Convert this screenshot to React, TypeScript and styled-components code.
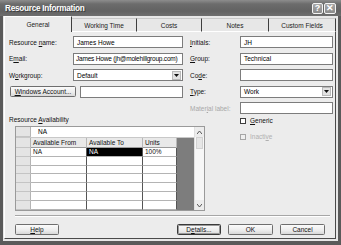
import React from "react";
import styled, { createGlobalStyle } from "styled-components";

const GlobalStyle = createGlobalStyle`
  html, body {
    margin: 0;
    padding: 0;
    background: #ffffff;
  }
  body {
    font-family: "Liberation Sans", Arial, sans-serif;
    font-size: 6.5px;
    color: #000;
  }
  * { box-sizing: border-box; }
`;

const Window = styled.div`
  width: 341px;
  height: 245px;
  display: flex;
  flex-direction: column;
  background: #5a5a5a;
  overflow: hidden;
`;

const TitleBar = styled.div`
  height: 16px;
  flex: none;
  display: flex;
  align-items: center;
  padding: 0 5px 0 5px;
  background: linear-gradient(#8d8d8d 0%, #6c6c6c 25%, #626262 70%, #6e6e6e 100%);
`;

const Title = styled.div`
  flex: 1;
  color: #fff;
  font-size: 8.2px;
  font-weight: bold;
  letter-spacing: -0.25px;
  text-shadow: 1px 1px 0 #3c3c3c;
`;

const CapButton = styled.div<{ $wide?: boolean }>`
  width: ${(p) => (p.$wide ? 12 : 11)}px;
  height: 11px;
  margin-left: 1px;
  border: 1px solid #f4f4f4;
  border-radius: 2px;
  background: linear-gradient(#a8a8a8, #8a8a8a);
  color: #fff;
  font-size: 9px;
  font-weight: bold;
  line-height: 9px;
  text-align: center;
`;

const Frame = styled.div`
  flex: 1;
  display: flex;
  padding: 0 3px 4px 3px;
`;

const Body = styled.div`
  flex: 1;
  display: flex;
  flex-direction: column;
  background: #e7e7e7;
  padding: 0 2px 2px 1px;
`;

const TabStrip = styled.div`
  height: 16px;
  display: flex;
  align-items: flex-end;
`;

const Tab = styled.div<{ $w: number; $active?: boolean }>`
  width: ${(p) => p.$w}px;
  height: ${(p) => (p.$active ? 16 : 14)}px;
  display: flex;
  align-items: center;
  justify-content: center;
  border-right: 1px solid #3f3f3f;
  border-top: 1px solid ${(p) => (p.$active ? "#ffffff" : "#c8c8c8")};
  border-left: ${(p) => (p.$active ? "1px solid #ffffff" : "none")};
  border-bottom: ${(p) => (p.$active ? "none" : "1px solid #ffffff")};
  background: ${(p) => (p.$active ? "#ececec" : "#e7e7e7")};
  color: #222;
  padding-top: ${(p) => (p.$active ? 0 : 1)}px;
`;

const Panel = styled.div`
  flex: 1;
  display: flex;
  flex-direction: column;
  background: #ececec;
  border-left: 1px solid #ffffff;
  border-right: 1px solid #4a4a4a;
  border-bottom: 1px solid #4a4a4a;
  padding: 4px 2px 0 4px;
`;

const FormGrid = styled.div`
  display: grid;
  grid-template-columns: 64px 110px 57px 93px;
  grid-auto-rows: 12px;
  row-gap: 4.5px;
  align-items: center;
`;

const Label = styled.div<{ $disabled?: boolean; $right?: boolean }>`
  grid-column: ${(p) => (p.$right ? 3 : "auto")};
  margin-left: ${(p) => (p.$right ? 7 : 0)}px;
  color: ${(p) => (p.$disabled ? "#a8a8a8" : "#111")};
  white-space: nowrap;
`;

const Field = styled.div<{ $tight?: boolean }>`
  height: 12px;
  display: flex;
  align-items: center;
  border: 1px solid #7c7c7c;
  background: #fff;
  padding-left: ${(p) => (p.$tight ? 2 : 3)}px;
  letter-spacing: ${(p) => (p.$tight ? "-0.2px" : "0")};
  white-space: nowrap;
  overflow: hidden;
`;

const Combo = styled(Field)`
  padding-right: 1px;
  & > span {
    flex: 1;
  }
`;

const ComboArrow = styled.div`
  width: 9px;
  height: 9px;
  background: #e2e2e2;
  border: 1px solid #b9b9b9;
  display: flex;
  align-items: center;
  justify-content: center;
`;

const AccountRow = styled.div`
  grid-column: 1 / 3;
  display: flex;
  align-items: center;
  gap: 4px;
  padding-left: 1px;
  & > :last-child {
    flex: 1;
  }
`;

const Button = styled.div<{ $w: number; $focus?: boolean }>`
  width: ${(p) => p.$w}px;
  height: 11px;
  flex: none;
  display: flex;
  align-items: center;
  justify-content: center;
  border: 1px solid ${(p) => (p.$focus ? "#3a3a3a" : "#6e6e6e")};
  border-radius: 1.5px;
  background: linear-gradient(#fbfbfb, #ececec 60%, #d8d8d8);
  box-shadow: ${(p) => (p.$focus ? "inset 0 0 0 1px #9a9a9a" : "none")};
  color: #111;
  white-space: nowrap;
`;

const Lower = styled.div`
  display: grid;
  grid-template-columns: 231px 1fr;
  margin-top: 2px;
  height: 96px;
`;

const Availability = styled.div`
  display: flex;
  flex-direction: column;
`;

const Checks = styled.div`
  display: flex;
  flex-direction: column;
  gap: 9px;
  padding-top: 1px;
`;

const CheckRow = styled.div<{ $disabled?: boolean }>`
  display: flex;
  align-items: center;
  gap: 4px;
  color: ${(p) => (p.$disabled ? "#b0b0b0" : "#111")};
`;

const Box = styled.div<{ $disabled?: boolean }>`
  width: 6px;
  height: 6px;
  background: ${(p) => (p.$disabled ? "#efefef" : "#fff")};
  border: 1px solid ${(p) => (p.$disabled ? "#a6a6a6" : "#3d3d3d")};
`;

const Sheet = styled.div`
  margin: 3px 0 0 6px;
  width: 190px;
  height: 85px;
  display: flex;
  border: 1px solid #9a9a9a;
  background: #fff;
`;

const SheetMain = styled.div`
  flex: 1;
  display: flex;
  flex-direction: column;
`;

const EditBar = styled.div`
  height: 11px;
  display: flex;
  border-bottom: 1px solid #c8c8c8;
`;

const GridRow = styled.div<{ $h: number }>`
  height: ${(p) => p.$h}px;
  display: flex;
`;

const RowHead = styled.div`
  width: 15px;
  flex: none;
  background: #e4e4e4;
  border-right: 1px solid #b4b4b4;
  border-bottom: 1px solid #c4c4c4;
`;

const Cell = styled.div<{ $w: number; $head?: boolean; $sel?: boolean }>`
  width: ${(p) => p.$w}px;
  flex: none;
  display: flex;
  align-items: center;
  padding-left: 2px;
  white-space: nowrap;
  overflow: hidden;
  background: ${(p) => (p.$sel ? "#000" : p.$head ? "#e9e9e9" : "#fff")};
  color: ${(p) => (p.$sel ? "#fff" : "#111")};
  border-right: 1px solid ${(p) => (p.$head ? "#b8b8b8" : "#555")};
  border-bottom: 1px solid ${(p) => (p.$head ? "#9c9c9c" : "#b4b4b4")};
`;

const Empty = styled.div`
  flex: 1;
  background: #7d7d7d;
`;

const EditText = styled.div`
  flex: 1;
  display: flex;
  align-items: center;
  padding-left: 7px;
`;

const ScrollBar = styled.div`
  width: 10px;
  flex: none;
  display: flex;
  flex-direction: column;
  justify-content: space-between;
  background: #f7f7f7;
  border-left: 1px solid #e0e0e0;
`;

const ScrollArrow = styled.div`
  height: 10px;
  display: flex;
  align-items: center;
  justify-content: center;
  background: #ececec;
`;

const Thumb = styled.div`
  height: 12px;
  margin: 0 1px;
  background: #e6e6e6;
  border: 1px solid #d2d2d2;
`;

const ScrollTrack = styled.div`
  flex: 1;
  display: flex;
  flex-direction: column;
`;

const Divider = styled.div`
  margin: 3px 3px 0 6px;
  height: 2px;
  border-top: 1px solid #a6a6a6;
  border-bottom: 1px solid #ffffff;
`;

const ButtonRow = styled.div`
  display: flex;
  gap: 7px;
  margin-top: 7px;
  padding: 0 8px 0 6px;
  & > :first-child {
    margin-right: auto;
  }
`;

const Arrow = ({ up }: { up?: boolean }) => (
  <svg width="5" height="3" viewBox="0 0 5 3">
    <path d={up ? "M0 3 L2.5 0 L5 3" : "M0 0 L2.5 3 L5 0"} fill="none" stroke="#555" strokeWidth="1" />
  </svg>
);

const DropDown = ({ value }: { value: string }) => (
  <Combo>
    <span>{value}</span>
    <ComboArrow>
      <svg width="5" height="3" viewBox="0 0 5 3">
        <path d="M0 0 L5 0 L2.5 3 Z" fill="#111" />
      </svg>
    </ComboArrow>
  </Combo>
);

const tabs = [
  { label: "General", w: 68, active: true },
  { label: "Working Time", w: 65 },
  { label: "Costs", w: 65 },
  { label: "Notes", w: 67 },
  { label: "Custom Fields", w: 67 },
];

const cols = [56, 56, 34];

const rows = [
  ["NA", "NA", "100%"],
  ["", "", ""],
  ["", "", ""],
  ["", "", ""],
  ["", "", ""],
  ["", "", ""],
  ["", "", ""],
];

export default function App() {
  return (
    <>
      <GlobalStyle />
      <Window>
        <TitleBar>
          <Title>Resource Information</Title>
          <CapButton>?</CapButton>
          <CapButton $wide>✕</CapButton>
        </TitleBar>
        <Frame>
          <Body>
            <TabStrip>
              {tabs.map((t) => (
                <Tab key={t.label} $w={t.w} $active={t.active}>
                  {t.label}
                </Tab>
              ))}
            </TabStrip>
            <Panel>
              <FormGrid>
                <Label>Resource <u>n</u>ame:</Label>
                <Field>James Howe</Field>
                <Label $right><u>I</u>nitials:</Label>
                <Field>JH</Field>

                <Label>E<u>m</u>ail:</Label>
                <Field $tight>James Howe (jh@molehillgroup.com)</Field>
                <Label $right><u>G</u>roup:</Label>
                <Field>Technical</Field>

                <Label>W<u>o</u>rkgroup:</Label>
                <DropDown value="Default" />
                <Label $right>Co<u>d</u>e:</Label>
                <Field />

                <AccountRow>
                  <Button $w={66}><u>W</u>indows Account...</Button>
                  <Field />
                </AccountRow>
                <Label $right><u>T</u>ype:</Label>
                <DropDown value="Work" />

                <Label $right $disabled>Mater<u>i</u>al label:</Label>
                <Field />
              </FormGrid>

              <Lower>
                <Availability>
                  <Label>Resource <u>A</u>vailability</Label>
                  <Sheet>
                    <SheetMain>
                      <EditBar>
                        <RowHead />
                        <EditText>NA</EditText>
                      </EditBar>
                      <GridRow $h={10}>
                        <RowHead />
                        {["Available From", "Available To", "Units"].map((h, i) => (
                          <Cell key={h} $w={cols[i]} $head>
                            {h}
                          </Cell>
                        ))}
                        <Empty />
                      </GridRow>
                      {rows.map((r, ri) => (
                        <GridRow key={ri} $h={9}>
                          <RowHead />
                          {r.map((v, ci) => (
                            <Cell key={ci} $w={cols[ci]} $sel={ri === 0 && ci === 1}>
                              {v}
                            </Cell>
                          ))}
                          <Empty />
                        </GridRow>
                      ))}
                    </SheetMain>
                    <ScrollBar>
                      <ScrollTrack>
                        <ScrollArrow>
                          <Arrow up />
                        </ScrollArrow>
                        <Thumb />
                      </ScrollTrack>
                      <ScrollArrow>
                        <Arrow />
                      </ScrollArrow>
                    </ScrollBar>
                  </Sheet>
                </Availability>
                <Checks>
                  <CheckRow>
                    <Box />
                    <span><u>G</u>eneric</span>
                  </CheckRow>
                  <CheckRow $disabled>
                    <Box $disabled />
                    <span>Inacti<u>v</u>e</span>
                  </CheckRow>
                </Checks>
              </Lower>

              <Divider />
              <ButtonRow>
                <Button $w={44}><u>H</u>elp</Button>
                <Button $w={44} $focus>D<u>e</u>tails...</Button>
                <Button $w={45}>OK</Button>
                <Button $w={45}>Cancel</Button>
              </ButtonRow>
            </Panel>
          </Body>
        </Frame>
      </Window>
    </>
  );
}
